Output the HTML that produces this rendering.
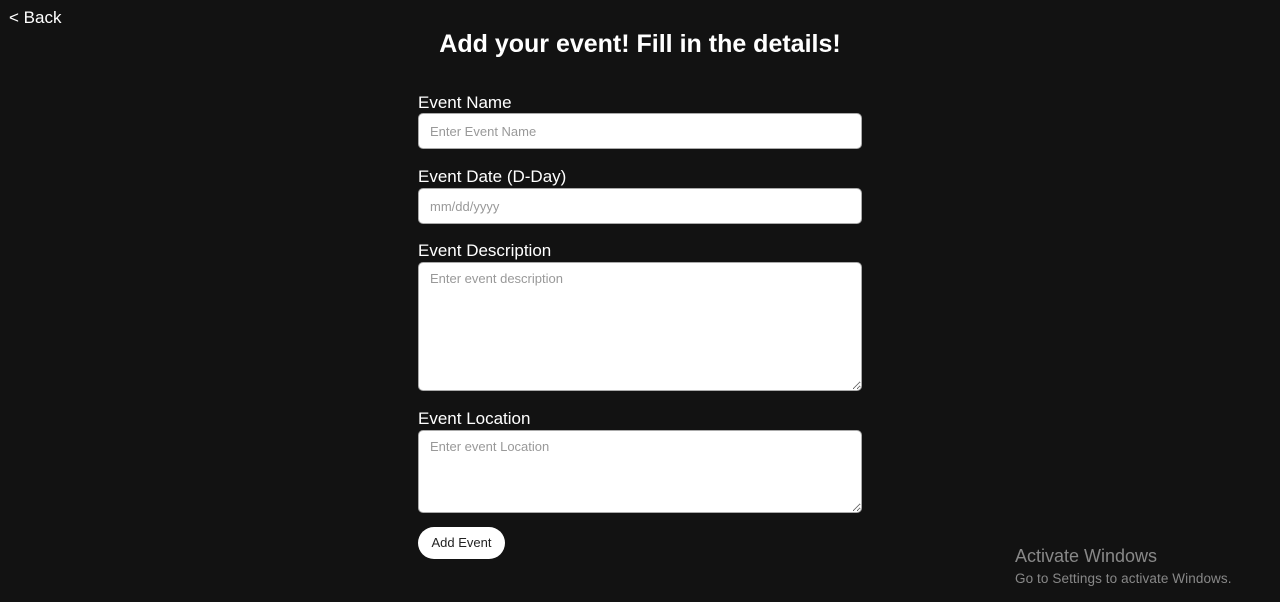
<!DOCTYPE html>
<html><head><meta charset="utf-8"><style>
*{box-sizing:border-box;margin:0;padding:0}
html,body{width:1280px;height:602px;background:#121212;overflow:hidden;font-family:"Liberation Sans",sans-serif;color:#fff;position:relative}
.back{position:absolute;left:9px;top:8px;font-size:17px}
h1{position:absolute;left:0;width:1280px;text-align:center;top:30px;font-size:25px;font-weight:bold}
.l{position:absolute;left:418px;font-size:17px}
.f{position:absolute;left:418px;width:444px;background:#fff;border:1px solid #aaa;border-radius:5px;color:#999;font-size:13px;padding:0 11px;resize:both}
textarea.f::placeholder{color:#999}
.btn{position:absolute;left:418px;top:527px;width:87px;height:32px;background:#fff;border-radius:16px;color:#222;font-size:13px;text-align:center;line-height:32px}
.w1{position:absolute;left:1015px;top:546px;font-size:18px;color:#888}
.w2{position:absolute;left:1015px;top:571px;font-size:13.5px;color:#888;letter-spacing:0.1px}
textarea.f{font-family:"Liberation Sans",sans-serif;padding-top:8px;line-height:16px}
</style></head><body>
<div class="back">&lt; Back</div>
<h1>Add your event! Fill in the details!</h1>
<div class="l" style="top:93px">Event Name</div>
<div class="f" style="top:113px;height:36px;line-height:36px">Enter Event Name</div>
<div class="l" style="top:167px">Event Date (D-Day)</div>
<div class="f" style="top:188px;height:36px;line-height:36px">mm/dd/yyyy</div>
<div class="l" style="top:241px">Event Description</div>
<textarea class="f" style="top:262px;height:129px" placeholder="Enter event description"></textarea>
<div class="l" style="top:409px">Event Location</div>
<textarea class="f" style="top:430px;height:83px" placeholder="Enter event Location"></textarea>
<div class="btn">Add Event</div>
<div class="w1">Activate Windows</div>
<div class="w2">Go to Settings to activate Windows.</div>
</body></html>
